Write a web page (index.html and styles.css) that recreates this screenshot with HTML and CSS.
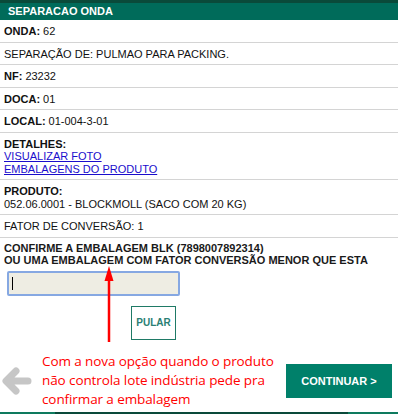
FILE: index.html
```html
<!DOCTYPE html>
<html>
<head>
<meta charset="utf-8">
<link rel="stylesheet" href="styles.css">
</head>
<body>
<div class="topbar"></div>
<div class="header">SEPARACAO ONDA</div>
<div class="row"><b>ONDA:</b> 62</div>
<div class="row">SEPARAÇÃO DE: PULMAO PARA PACKING.</div>
<div class="row"><b>NF:</b> 23232</div>
<div class="row"><b>DOCA:</b> 01</div>
<div class="row"><b>LOCAL:</b> 01-004-3-01</div>
<div class="row"><b>DETALHES:</b><br><a href="#">VISUALIZAR FOTO</a><br><a href="#">EMBALAGENS DO PRODUTO</a></div>
<div class="row"><b>PRODUTO:</b><br>052.06.0001 - BLOCKMOLL (SACO COM 20 KG)</div>
<div class="row">FATOR DE CONVERSÃO: 1</div>
<div class="confirm">
  <div class="confirm-text">CONFIRME A EMBALAGEM BLK (7898007892314)<br>OU UMA EMBALAGEM COM FATOR CONVERSÃO MENOR QUE ESTA</div>
  <div class="input"><span class="caret"></span></div>
  <button class="pular">PULAR</button>
  <svg class="red-arrow" width="12" height="78" viewBox="0 0 12 78">
    <line x1="6" y1="12" x2="6" y2="76" stroke="#ff0000" stroke-width="2.5"/>
    <polygon points="6,0 1.5,15 10.5,15" fill="#ff0000"/>
  </svg>
</div>
<div class="bottom">
  <svg class="back" width="32" height="32" viewBox="0 0 32 32">
    <path d="M27 16 H6 M15 6 L5 16 L15 26" fill="none" stroke="#c6c6c6" stroke-width="7" stroke-linecap="round" stroke-linejoin="round"/>
  </svg>
  <div class="note">Com a nova opção quando o produto<br>não controla lote indústria pede pra<br>confirmar a embalagem</div>
  <button class="continuar">CONTINUAR &gt;</button>
</div>
<div class="footstrip"><span class="fs1"></span><span class="fs2"></span><span class="fs3"></span></div>
</body>
</html>
```
FILE: styles.css
```css
html, body {
  margin: 0;
  padding: 0;
  background: #ffffff;
}
body {
  width: 398px;
  height: 414px;
  overflow: hidden;
  font-family: "Liberation Sans", Arial, sans-serif;
  font-size: 11px;
  color: #111111;
  position: relative;
}
.topbar {
  height: 3px;
  background: #0a4a3a;
}
.header {
  height: 17px;
  line-height: 17px;
  background: #006b5a;
  color: #ffffff;
  font-weight: bold;
  font-size: 11px;
  padding-left: 8px;
}
.row {
  padding: 5px 4px 4px 4px;
  line-height: 12.5px;
  border-bottom: 1px solid #d4d4d4;
}
.row b {
  font-weight: bold;
}
.row a {
  color: #1a0dcc;
  text-decoration: underline;
}
.confirm {
  position: relative;
  padding: 4px 4px 0 4px;
}
.confirm-text {
  line-height: 12.5px;
  font-weight: bold;
  color: #1a1a1a;
}
.input {
  margin: 4px 0 0 3px;
  width: 169px;
  height: 21px;
  background: #eeede3;
  border: 2px solid #86a8e2;
  border-radius: 2px;
  position: relative;
}
.caret {
  position: absolute;
  left: 3px;
  top: 4px;
  width: 1px;
  height: 13px;
  background: #000;
}
.pular {
  display: block;
  margin: 10px 0 0 127px;
  width: 45px;
  height: 34px;
  background: #ffffff;
  border: 1px solid #1f7a66;
  color: #2a7f74;
  font-family: "Liberation Sans", Arial, sans-serif;
  font-weight: bold;
  font-size: 10px;
  padding: 0;
}
.red-arrow {
  position: absolute;
  left: 103px;
  top: 28px;
}
.bottom {
  display: flex;
  align-items: center;
  margin-top: 12px;
  height: 58px;
}
.back {
  margin-left: 1px;
  flex: none;
}
.note {
  margin-left: 9px;
  font-family: "Open Sans", sans-serif;
  font-size: 13.5px;
  line-height: 19px;
  color: #ff0000;
  letter-spacing: -0.1px;
  flex: none;
  width: 240px;
}
.continuar {
  margin-left: 4px;
  width: 106px;
  height: 34px;
  background: #00806a;
  color: #ffffff;
  border: none;
  font-family: "Liberation Sans", Arial, sans-serif;
  font-weight: bold;
  font-size: 11px;
  padding: 0;
  flex: none;
}
.footstrip {
  display: flex;
  height: 2px;
  position: absolute;
  left: 0;
  right: 0;
  bottom: 0;
}
.fs1 { width: 55px; background: #0e7a5e; }
.fs2 { width: 293px; background: #0a4a3a; }
.fs3 { flex: 1; background: #0e7a5e; }
```
